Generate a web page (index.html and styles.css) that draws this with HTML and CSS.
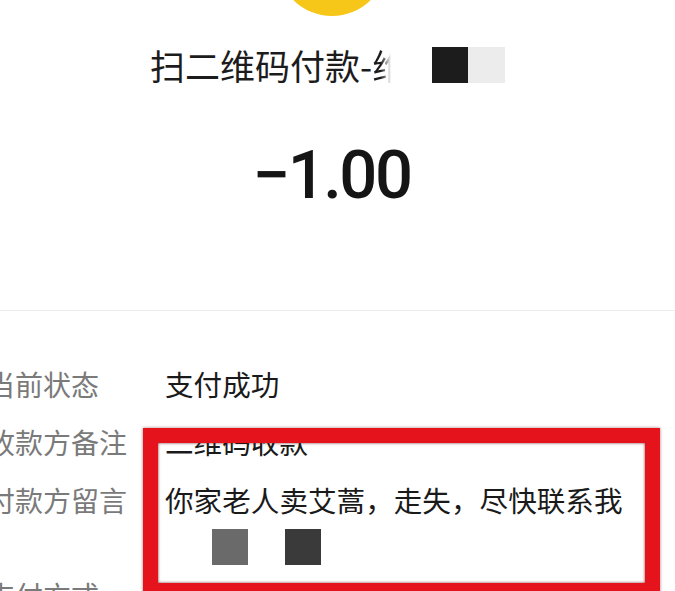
FILE: index.html
```html
<!DOCTYPE html>
<html lang="zh-CN">
<head>
  <meta charset="UTF-8" />
  <meta name="viewport" content="width=device-width, initial-scale=1" />
  <title>账单详情</title>
  <link rel="stylesheet" href="styles.css">
</head>
<body>
  <div class="page">
    <section class="hero">
      <div class="avatar"></div>

      <div class="title">
        <span class="title-text">扫二维码付款-</span>
        <span class="title-cut"><span>维</span></span>
        <span class="mask mask-dark"></span>
        <span class="mask mask-light"></span>
      </div>

      <div class="amount">&minus;1.00</div>
    </section>

    <div class="divider"></div>

    <section class="details">
      <div class="row">
        <div class="label">当前状态</div>
        <div class="value">支付成功</div>
      </div>
      <div class="row">
        <div class="label">收款方备注</div>
        <div class="value">二维码收款</div>
      </div>
      <div class="row row-message">
        <div class="label">付款方留言</div>
        <div class="value">
          <div>你家老人卖艾蒿，走失，尽快联系我</div>
          <div class="thumbs">
            <span class="thumb thumb-mid"></span>
            <span class="thumb thumb-dark"></span>
          </div>
        </div>
      </div>
      <div class="row">
        <div class="label">支付方式</div>
        <div class="value"></div>
      </div>
    </section>

    <!-- red highlight drawn over the remark / message rows -->
    <div class="highlight"></div>
  </div>
</body>
</html>
```

FILE: styles.css
```css
body {
  margin: 0;
  background: #fff;
  font-family: "Noto Sans CJK SC", "Noto Sans", sans-serif;
  color: #1a1a1a;
}

.page {
  position: relative;
  width: 675px;
  height: 591px;
  overflow: hidden;
  background: #fff;
}

.hero {
  padding-right: 12px;
  text-align: center;
}

.avatar {
  width: 110px;
  height: 110px;
  margin: -94px auto 0;
  border-radius: 50%;
  background: #f6c619;
}

.title {
  display: flex;
  align-items: center;
  height: 40px;
  margin-top: 29px;
  padding-left: 150px;
  font-size: 35px;
  line-height: 40px;
  color: #1c1c1c;
}

.title-cut {
  display: inline-block;
  width: 60px;
  overflow: hidden;
  text-align: left;
}

.title-cut span {
  display: inline-block;
  -webkit-mask-image: linear-gradient(90deg, #000 9px, transparent 19px);
  mask-image: linear-gradient(90deg, #000 9px, transparent 19px);
}

.mask {
  width: 37px;
  height: 36px;
}

.mask-dark {
  width: 36px;
  background: #1c1c1c;
}

.mask-light {
  background: #ececec;
}

.amount {
  margin-top: 56px;
  font-family: Roboto, "Liberation Sans", sans-serif;
  font-size: 67px;
  font-weight: 500;
  line-height: 68px;
  color: #151515;
  letter-spacing: -2.5px;
}

.divider {
  height: 1px;
  margin-top: 101px;
  background: #ededed;
}

.details {
  padding-top: 44px;
  margin-left: -13px;
}

.row {
  display: flex;
  padding: 9px 0;
  line-height: 40px;
}

.label {
  flex: 0 0 178px;
  font-size: 28px;
  color: #7a7a7a;
}

.value {
  font-size: 28.6px;
  color: #1a1a1a;
}

.thumbs {
  display: flex;
  gap: 37px;
  margin: 9px 0 -8px 47px;
}

.thumb {
  width: 36px;
  height: 36px;
}

.thumb-mid {
  background: #6a6a6a;
}

.thumb-dark {
  background: #3a3a3a;
}

.highlight {
  position: absolute;
  top: 428px;
  left: 143px;
  width: 517px;
  height: 170px;
  box-sizing: border-box;
  border: 15px solid #e5131b;
  box-shadow: inset 0 0 3px rgba(90, 0, 0, 0.8), 0 0 3px rgba(90, 0, 0, 0.5);
}
```
